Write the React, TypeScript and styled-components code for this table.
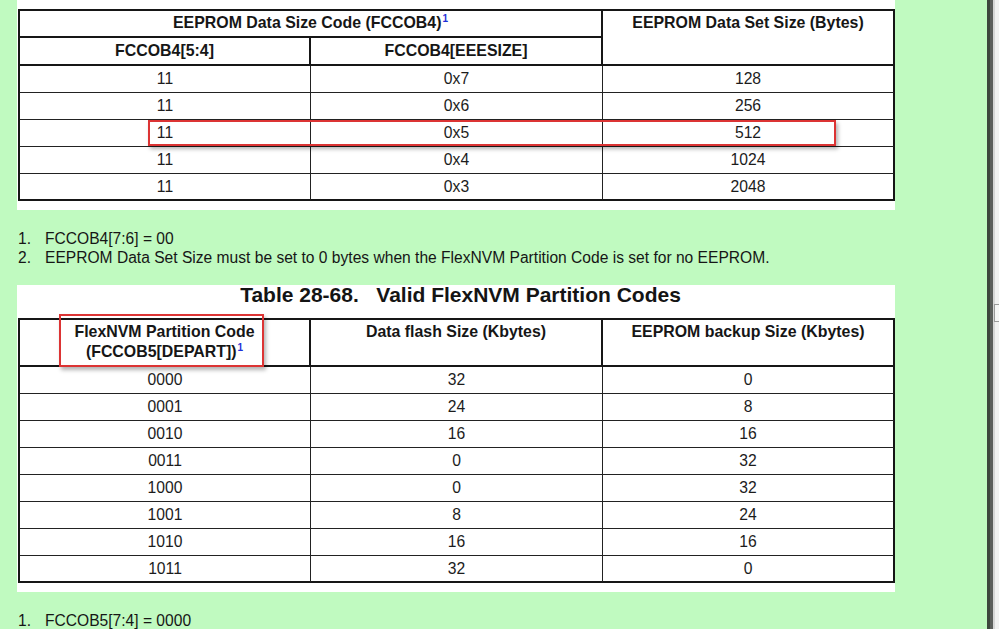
import React from "react";
import styled, { createGlobalStyle } from "styled-components";

const GlobalStyle = createGlobalStyle`
  html, body {
    margin: 0;
    padding: 0;
    background: #c0fac0;
  }
  body {
    font-family: "Liberation Sans", Arial, Helvetica, sans-serif;
    color: #1c1c1c;
  }
  * { box-sizing: border-box; }
`;

const Screen = styled.div`
  display: flex;
  width: 999px;
  height: 629px;
  overflow: hidden;
  background: #c0fac0;
`;

const Viewport = styled.div`
  flex: 1;
  padding-left: 17px;
  overflow: hidden;
`;

const ScrollTrack = styled.div`
  position: relative;
  width: 12px;
  display: flex;
`;

const ScrollEdge = styled.div`
  width: 6px;
  background: linear-gradient(to right, #3d463d 0, #3d463d 3px, #5c5f5c 3px, #5c5f5c 6px);
`;

const ScrollBody = styled.div`
  flex: 1;
  position: relative;
  background: linear-gradient(to right, #d6d6d6 0, #d6d6d6 2px, #f1f1f1 2px);
`;

const ScrollThumb = styled.div`
  position: absolute;
  left: 1px;
  right: 0;
  top: 304px;
  height: 18px;
  border: 1px solid #9a9a9a;
  border-right: none;
  background: #f6f6f6;
`;

const Sheet = styled.div<{ $top: number; $bottom: number }>`
  position: relative;
  width: 878px;
  background: #ffffff;
  padding: ${(p) => p.$top}px 0 ${(p) => p.$bottom}px 1px;
`;

const Title = styled.div`
  font-size: 21px;
  line-height: 20px;
  font-weight: bold;
  text-align: center;
  padding-left: 8px;
  margin-bottom: 13px;
  color: #141414;
  white-space: pre;
`;

const Table = styled.table`
  width: 877px;
  table-layout: fixed;
  border-collapse: separate;
  border-spacing: 0;
  border-top: 2px solid #161616;
  border-left: 2px solid #161616;
  font-size: 15.7px;
`;

const HeadCell = styled.th<{ $h: number; $mid?: boolean }>`
  height: ${(p) => p.$h}px;
  padding: ${(p) => (p.$mid ? "0 4px" : "2px 4px 0")};
  vertical-align: ${(p) => (p.$mid ? "middle" : "top")};
  text-align: center;
  font-weight: bold;
  font-size: 15.9px;
  line-height: 20px;
  border-right: 2px solid #161616;
  border-bottom: 2px solid #161616;
  color: #161616;
`;

const Cell = styled.td<{ $last?: boolean }>`
  height: 27px;
  padding: 0 4px;
  text-align: center;
  vertical-align: middle;
  line-height: 20px;
  border-right: 1px solid #222;
  border-bottom: ${(p) => (p.$last ? "2px solid #161616" : "1px solid #222")};
  &:last-child {
    border-right: 2px solid #161616;
  }
`;

const Sup = styled.sup`
  color: #1f2fd8;
  font-size: 10px;
  font-weight: bold;
  line-height: 0;
  vertical-align: 6px;
  margin-left: 1px;
`;

const Notes = styled.ol`
  list-style: none;
  margin: 0;
  padding: 19px 0 18px 1px;
  font-size: 15.6px;
  line-height: 19px;
  color: #161616;
`;

const NoteItem = styled.li`
  display: flex;
`;

const NoteNum = styled.span`
  width: 27px;
  flex: none;
`;

const Highlight = styled.div<{ $l: number; $t: number; $w: number; $h: number }>`
  position: absolute;
  left: ${(p) => p.$l}px;
  top: ${(p) => p.$t}px;
  width: ${(p) => p.$w}px;
  height: ${(p) => p.$h}px;
  border: 2px solid #dc3434;
  box-shadow: 2px 3px 4px rgba(0, 0, 0, 0.3);
  pointer-events: none;
`;

const sizeRows: [string, string, string][] = [
  ["11", "0x7", "128"],
  ["11", "0x6", "256"],
  ["11", "0x5", "512"],
  ["11", "0x4", "1024"],
  ["11", "0x3", "2048"],
];

const partRows: [string, string, string][] = [
  ["0000", "32", "0"],
  ["0001", "24", "8"],
  ["0010", "16", "16"],
  ["0011", "0", "32"],
  ["1000", "0", "32"],
  ["1001", "8", "24"],
  ["1010", "16", "16"],
  ["1011", "32", "0"],
];

const Cols = () => (
  <colgroup>
    <col style={{ width: 291 }} />
    <col style={{ width: 292 }} />
    <col style={{ width: 292 }} />
  </colgroup>
);

export default function App() {
  return (
    <>
      <GlobalStyle />
      <Screen>
        <Viewport>
          <Sheet $top={9} $bottom={9}>
            <Table>
              <Cols />
              <thead>
                <tr>
                  <HeadCell $h={27} colSpan={2}>
                    EEPROM Data Size Code (FCCOB4)<Sup>1</Sup>
                  </HeadCell>
                  <HeadCell $h={55} rowSpan={2}>
                    EEPROM Data Set Size (Bytes)
                  </HeadCell>
                </tr>
                <tr>
                  <HeadCell $h={28} $mid>
                    FCCOB4[5:4]
                  </HeadCell>
                  <HeadCell $h={28} $mid>
                    FCCOB4[EEESIZE]
                  </HeadCell>
                </tr>
              </thead>
              <tbody>
                {sizeRows.map((r, i) => (
                  <tr key={i}>
                    {r.map((c, j) => (
                      <Cell key={j} $last={i === sizeRows.length - 1}>
                        {c}
                      </Cell>
                    ))}
                  </tr>
                ))}
              </tbody>
            </Table>
            <Highlight $l={131} $t={120} $w={688} $h={26} />
          </Sheet>

          <Notes>
            <NoteItem>
              <NoteNum>1.</NoteNum>
              <span>FCCOB4[7:6] = 00</span>
            </NoteItem>
            <NoteItem>
              <NoteNum>2.</NoteNum>
              <span>
                EEPROM Data Set Size must be set to 0 bytes when the FlexNVM Partition Code is set for no EEPROM.
              </span>
            </NoteItem>
          </Notes>

          <Sheet $top={0} $bottom={9}>
            <Title>{"Table 28-68.   Valid FlexNVM Partition Codes"}</Title>
            <Table>
              <Cols />
              <thead>
                <tr>
                  <HeadCell $h={47}>
                    FlexNVM Partition Code
                    <br />
                    (FCCOB5[DEPART])<Sup>1</Sup>
                  </HeadCell>
                  <HeadCell $h={47}>Data flash Size (Kbytes)</HeadCell>
                  <HeadCell $h={47}>EEPROM backup Size (Kbytes)</HeadCell>
                </tr>
              </thead>
              <tbody>
                {partRows.map((r, i) => (
                  <tr key={i}>
                    {r.map((c, j) => (
                      <Cell key={j} $last={i === partRows.length - 1}>
                        {c}
                      </Cell>
                    ))}
                  </tr>
                ))}
              </tbody>
            </Table>
            <Highlight $l={42} $t={29} $w={205} $h={53} />
          </Sheet>

          <Notes>
            <NoteItem>
              <NoteNum>1.</NoteNum>
              <span>FCCOB5[7:4] = 0000</span>
            </NoteItem>
          </Notes>
        </Viewport>
        <ScrollTrack>
          <ScrollEdge />
          <ScrollBody>
            <ScrollThumb />
          </ScrollBody>
        </ScrollTrack>
      </Screen>
    </>
  );
}
